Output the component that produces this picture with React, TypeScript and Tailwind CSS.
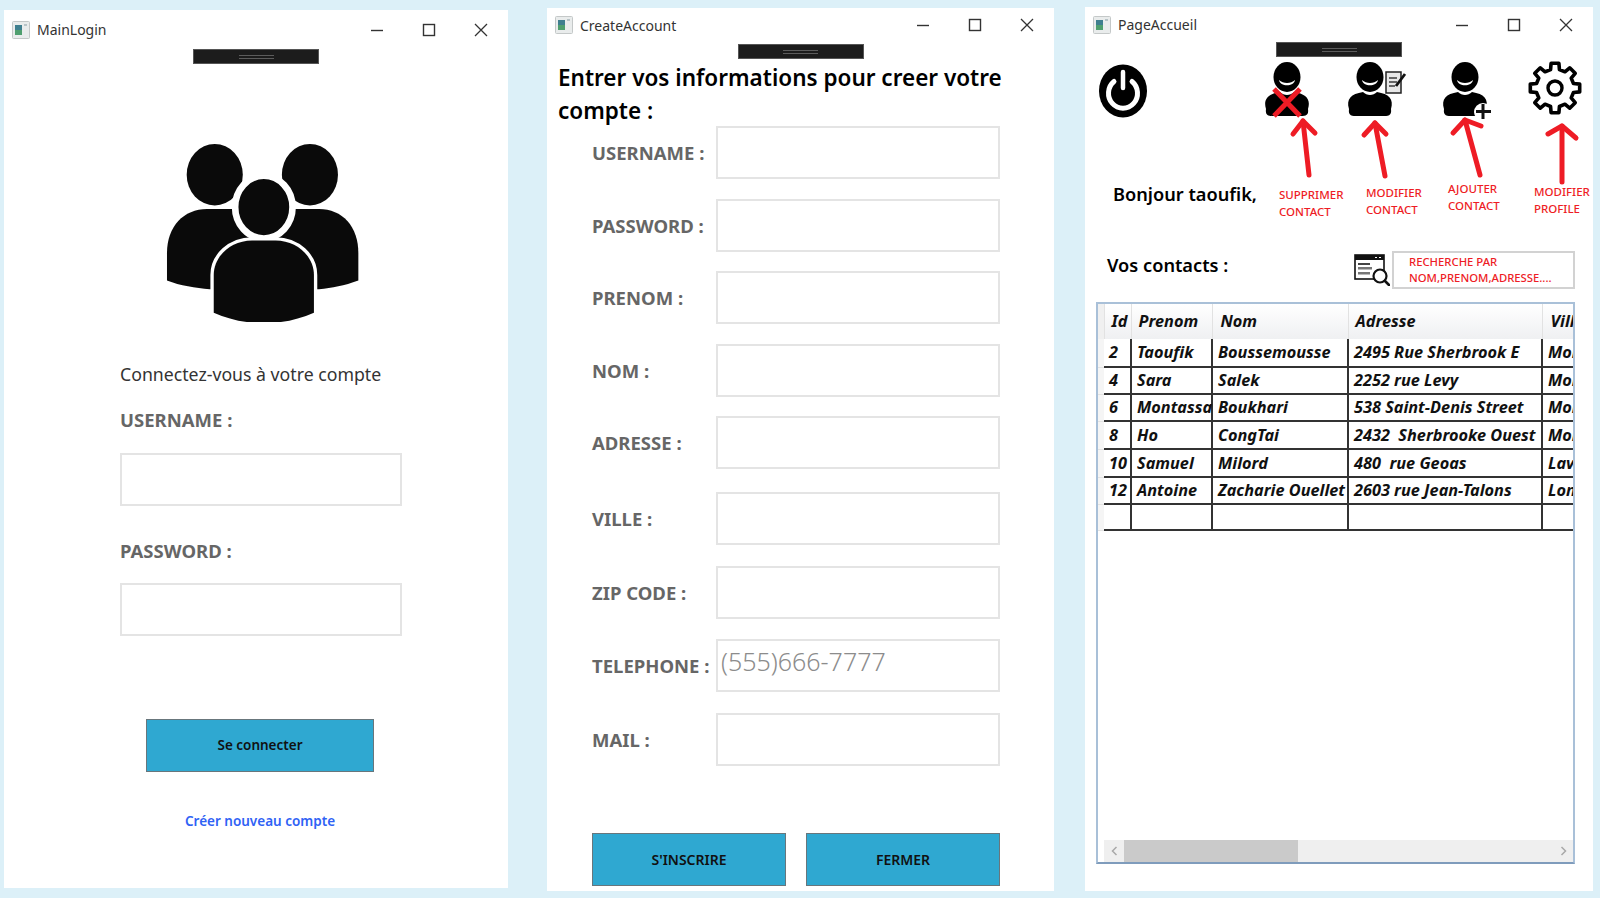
import React from 'react';

const gearPath = (() => {
  const pts: string[] = [];
  const teeth = 8;
  for (let i = 0; i < teeth; i++) {
    const a = (i * Math.PI * 2) / teeth - Math.PI / 2;
    const step = (Math.PI * 2) / teeth;
    const add = (r: number, off: number) => {
      pts.push(`${(28 + r * Math.cos(a + off * step)).toFixed(2)} ${(29 + r * Math.sin(a + off * step)).toFixed(2)}`);
    };
    add(19, -0.3);
    add(25, -0.2);
    add(25, 0.2);
    add(19, 0.3);
  }
  return `M${pts.join('L')}Z`;
})();

const AppIcon = () => (
  <svg width="18" height="18" viewBox="0 0 18 18" className="shrink-0">
    <rect x="0.5" y="0.5" width="17" height="17" rx="1" fill="#e9ecec" stroke="#c4c8c8" />
    <rect x="3" y="4" width="7" height="10" fill="#3f7f8f" />
    <rect x="3" y="9" width="7" height="5" fill="#4f9f6f" />
    <rect x="12" y="3" width="3" height="2" fill="#b8c4c8" />
  </svg>
);

const WindowControls = () => (
  <div className="flex ml-auto pr-px text-[#333]">
    <div className="w-[52px] flex justify-center">
      <svg width="14" height="14" viewBox="0 0 14 14"><path d="M1 7.5h12" stroke="currentColor" strokeWidth="1.4" /></svg>
    </div>
    <div className="w-[52px] flex justify-center">
      <svg width="14" height="14" viewBox="0 0 14 14"><rect x="1.5" y="1.5" width="11" height="11" fill="none" stroke="currentColor" strokeWidth="1.4" /></svg>
    </div>
    <div className="w-[52px] flex justify-center">
      <svg width="14" height="14" viewBox="0 0 14 14"><path d="M1 1l12 12M13 1L1 13" stroke="currentColor" strokeWidth="1.3" /></svg>
    </div>
  </div>
);

const DebugBar = () => (
  <div className="mx-auto w-[126px] h-[15px] bg-[#1c1c1c] border border-[#555] flex items-center justify-center">
    <div className="w-[35px] h-[4px] border-y border-[#5c5c5c]" />
  </div>
);

const Window: React.FC<{ title: string; className: string; barClass: string; children: React.ReactNode }> = ({ title, className, barClass, children }) => (
  <div className={`bg-white shrink-0 self-start ${className}`}>
    <div className={`flex items-center pl-2 text-[14px] text-[#333] ${barClass}`}>
      <AppIcon />
      <span className="ml-[7px]">{title}</span>
      <WindowControls />
    </div>
    <DebugBar />
    {children}
  </div>
);

const Field: React.FC<{ value?: string; className: string }> = ({ value, className }) => (
  <input
    readOnly
    value={value || ''}
    className={`block h-[53px] border-2 border-[#e4e4e4] bg-white px-[3px] pb-[10px] text-[25px] font-light text-[#8c8c8c] outline-none ${className}`}
  />
);

const ActionButton: React.FC<{ label: string; className: string }> = ({ label, className }) => (
  <button className={`h-[53px] bg-[#2fa8d1] border border-[#68767c] font-semibold text-[#111] ${className}`}>{label}</button>
);

const PeopleIcon = () => (
  <svg viewBox="488 433 576 533" className="block w-[193px] h-[178px] ml-[162px] mt-[80px]">
    <ellipse cx="633" cy="525" rx="84" ry="92" fill="#0a0a0a" />
    <ellipse cx="918" cy="525" rx="84" ry="92" fill="#0a0a0a" />
    <path d="M490 842V760C490 680 540 628 610 628H945C1015 628 1063 680 1063 760V842C1020 858 985 864 945 868H618C575 864 530 858 490 842Z" fill="#0a0a0a" />
    <ellipse cx="780" cy="622" rx="86" ry="94" fill="#0a0a0a" stroke="#fff" strokeWidth="20" />
    <path d="M630 938V825C630 770 680 722 745 722H815C880 722 930 770 930 825V938C835 980 725 980 630 938Z" fill="#0a0a0a" stroke="#fff" strokeWidth="20" paintOrder="stroke" />
  </svg>
);

const PowerIcon = () => (
  <svg viewBox="0 0 48 54" className="block w-[48px] h-[54px]">
    <ellipse cx="24" cy="27" rx="24" ry="26.5" fill="#000" />
    <path d="M15 17.5A14.5 15 0 1 0 33 17.5" fill="none" stroke="#fff" strokeWidth="5" strokeLinecap="round" />
    <path d="M24 8v16" stroke="#fff" strokeWidth="4.5" strokeLinecap="round" />
  </svg>
);

const Person: React.FC<{ children?: React.ReactNode }> = ({ children }) => (
  <svg viewBox="0 0 62 59" className="block w-[62px] h-[59px] overflow-visible">
    <ellipse cx="22" cy="18" rx="13.5" ry="15" fill="#000" />
    <path d="M14 21C18 25 26 25 30 21C29 28 15 28 14 21Z" fill="#fff" />
    <path d="M1 50C-2 40 3 35 15 33C19 37 25 37 29 33C41 35 46 40 43 50C44 57 40 57 34 57H10C4 57 0 57 1 50Z" fill="#000" />
    {children}
  </svg>
);

const GearIcon = () => (
  <svg viewBox="0 0 56 58" className="block w-[56px] h-[58px] -ml-[2px]">
    <path d={gearPath} fill="none" stroke="#000" strokeWidth="3.6" strokeLinejoin="round" />
    <circle cx="28" cy="29" r="7" fill="none" stroke="#000" strokeWidth="3.4" />
  </svg>
);

const SearchIcon = () => (
  <svg viewBox="0 0 36 32" className="block w-[36px] h-[32px]">
    <rect x="1" y="1" width="29" height="24" fill="#fff" stroke="#111" strokeWidth="1.6" />
    <rect x="1" y="1" width="29" height="5" fill="#111" />
    <path d="M21 3.5h2M25 3.5h2" stroke="#fff" strokeWidth="1.2" />
    <rect x="4" y="9" width="12" height="2" fill="#444" />
    <rect x="4" y="13" width="14" height="2.5" fill="#777" />
    <rect x="4" y="18" width="12" height="2.5" fill="#777" />
    <circle cx="26" cy="22" r="6.5" fill="#fff" stroke="#111" strokeWidth="2.2" />
    <path d="M31 27l4 4" stroke="#111" strokeWidth="2.6" strokeLinecap="round" />
  </svg>
);

const Arrow: React.FC<{ head: [number, number]; tail: [number, number]; wing: string; width: string }> = ({ head, tail, wing, width }) => (
  <svg viewBox={`0 0 ${width} 60`} className="block w-full h-[60px] overflow-visible">
    <path d={`M${tail[0]} ${tail[1]}L${head[0]} ${head[1]}`} stroke="#ee1c25" strokeWidth="5" strokeLinecap="round" fill="none" />
    <path d={wing} stroke="#ee1c25" strokeWidth="5" strokeLinecap="round" strokeLinejoin="round" fill="none" />
  </svg>
);

const contacts = [
  { id: '2', prenom: 'Taoufik', nom: 'Boussemousse', adresse: '2495 Rue Sherbrook E', ville: 'Montreal', row: 'h-[28px]' },
  { id: '4', prenom: 'Sara', nom: 'Salek', adresse: '2252 rue Levy', ville: 'Montreal', row: 'h-[27px]' },
  { id: '6', prenom: 'Montassa', nom: 'Boukhari', adresse: '538 Saint-Denis Street', ville: 'Montreal', row: 'h-[27px]' },
  { id: '8', prenom: 'Ho', nom: 'CongTai', adresse: '2432  Sherbrooke Ouest', ville: 'Montreal', row: 'h-[28px]' },
  { id: '10', prenom: 'Samuel', nom: 'Milord', adresse: '480  rue Geoas', ville: 'Laval', row: 'h-[28px]' },
  { id: '12', prenom: 'Antoine', nom: 'Zacharie Ouellet', adresse: '2603 rue Jean-Talons', ville: 'Longueuil', row: 'h-[27px]' },
  { id: '', prenom: '', nom: '', adresse: '', ville: '', row: 'h-[26px]' },
];

const createFields = [
  { label: 'USERNAME :', row: '-mt-[1px]' },
  { label: 'PASSWORD :', row: 'mt-[20px]' },
  { label: 'PRENOM :', row: 'mt-[19px]' },
  { label: 'NOM :', row: 'mt-[20px]' },
  { label: 'ADRESSE :', row: 'mt-[19px]' },
  { label: 'VILLE :', row: 'mt-[23px]' },
  { label: 'ZIP CODE :', row: 'mt-[21px]' },
  { label: 'TELEPHONE :', row: 'mt-[20px]', value: '(555)666-7777' },
  { label: 'MAIL :', row: 'mt-[21px]' },
];

const actionLabel = 'text-[11.5px] leading-[17px] font-medium text-[#ee1c25] whitespace-nowrap';
const cell = 'pl-[5px] border-b-2 border-r-2 border-[#333]';

export default function App() {
  return (
    <div className="w-[1600px] h-[898px] overflow-hidden bg-[#dcf0f8] flex font-['Noto_Sans',sans-serif]">
      {/* MainLogin */}
      <Window title="MainLogin" className="ml-[4px] mt-[10px] w-[504px] h-[878px]" barClass="h-[39px]">
        <PeopleIcon />
        <div className="pl-[116px]">
          <p className="mt-[40px] text-[17.7px] leading-[24px] text-[#333]">Connectez-vous à votre compte</p>
          <p className="mt-[22px] text-[18.5px] leading-[24px] font-bold text-[#666]">USERNAME :</p>
          <div className="mt-[21px]"><Field className="w-[282px]" /></div>
          <p className="mt-[33px] text-[18.5px] leading-[24px] font-bold text-[#666]">PASSWORD :</p>
          <div className="mt-[20px]"><Field className="w-[282px]" /></div>
          <div className="mt-[83px] ml-[26px] w-[228px] flex flex-col items-center">
            <ActionButton label="Se connecter" className="w-[228px] text-[13.5px]" />
            <a className="mt-[39px] text-[13.5px] leading-[20px] font-semibold text-[#2f62f5]">Créer nouveau compte</a>
          </div>
        </div>
      </Window>

      {/* CreateAccount */}
      <Window title="CreateAccount" className="ml-[39px] mt-[8px] w-[507px] h-[883px]" barClass="h-[36px] pb-[2px]">
        <h1 className="pl-[11px] mt-[2px] text-[22.5px] leading-[33px] font-semibold text-black">Entrer vos informations pour creer votre compte :</h1>
        <div className="pl-[45px]">
          {createFields.map((f) => (
            <div key={f.label} className={`flex items-center ${f.row}`}>
              <span className="w-[124px] text-[18.5px] font-bold text-[#666] whitespace-nowrap">{f.label}</span>
              <Field value={f.value} className="w-[284px]" />
            </div>
          ))}
          <div className="mt-[67px] flex gap-[20px]">
            <ActionButton label="S'INSCRIRE" className="w-[194px] text-[14px]" />
            <ActionButton label="FERMER" className="w-[194px] text-[14px]" />
          </div>
        </div>
      </Window>

      {/* PageAccueil */}
      <Window title="PageAccueil" className="ml-[31px] mt-[7px] w-[508px] h-[884px] flex flex-col" barClass="h-[35px]">
        <div className="flex mt-[2px]">
          <div className="w-[180px] pl-[14px]">
            <div className="mt-[5px]"><PowerIcon /></div>
            <p className="mt-[63px] ml-[14px] text-[18.2px] leading-[26px] font-semibold text-black whitespace-nowrap">Bonjour taoufik,</p>
          </div>
          <div className="w-[83px]">
            <Person>
              <path d="M9 30L35 57M35 30L9 57" stroke="#ee1c25" strokeWidth="5" />
            </Person>
            <Arrow head={[38, 3]} tail={[44, 57]} wing="M28 16L38 3L50 15" width="83" />
            <p className={`mt-[8px] pl-[14px] ${actionLabel}`}>SUPPRIMER<br />CONTACT</p>
          </div>
          <div className="w-[95px]">
            <Person>
              <rect x="38" y="13" width="15" height="21" fill="#e8e8e8" stroke="#222" strokeWidth="1.5" />
              <path d="M41 19h8M41 23h8M41 27h6" stroke="#666" strokeWidth="1.8" />
              <path d="M48 27L57 15" stroke="#111" strokeWidth="2.8" />
            </Person>
            <Arrow head={[27, 5]} tail={[37, 58]} wing="M16 17L27 5L38 16" width="95" />
            <p className={`mt-[6px] pl-[18px] ${actionLabel}`}>MODIFIER<br />CONTACT</p>
          </div>
          <div className="w-[86px]">
            <Person>
              <circle cx="40" cy="53" r="9" fill="#fff" />
              <path d="M40 45v15M33 52.5h15" stroke="#111" strokeWidth="3" />
            </Person>
            <Arrow head={[22, 2]} tail={[37, 57]} wing="M10 15L22 2L38 8" width="86" />
            <p className={`mt-[2px] pl-[5px] ${actionLabel}`}>AJOUTER<br />CONTACT</p>
          </div>
          <div className="w-[64px]">
            <GearIcon />
            <Arrow head={[33, 9]} tail={[33, 65]} wing="M19 17L33 9L47 21" width="64" />
            <p className={`mt-[6px] pl-[5px] ${actionLabel}`}>MODIFIER<br />PROFILE</p>
          </div>
        </div>

        <div className="mt-[31px] ml-[22px] mr-[18px] flex items-center">
          <span className="mb-[8px] text-[18.2px] font-semibold text-black">Vos contacts :</span>
          <div className="ml-auto flex items-center gap-[2px]">
            <SearchIcon />
            <div className="w-[183px] h-[38px] border-2 border-[#d2d2d2] pl-[15px] text-[11.3px] leading-[16px] font-medium text-[#ee1c25] flex flex-col justify-center whitespace-nowrap">
              <span>RECHERCHE PAR</span>
              <span>NOM,PRENOM,ADRESSE....</span>
            </div>
          </div>
        </div>

        <div className="mt-[13px] ml-[11px] mr-[18px] h-[562px] border-2 border-[#a9c0d8] border-b-[#7f9cbc] flex flex-col overflow-hidden">
          <div className="flex-1 overflow-hidden">
            <table className="table-fixed border-collapse w-[544px] text-[16.3px] italic font-bold text-[#111] whitespace-pre">
              <colgroup>
                <col className="w-[6px]" />
                <col className="w-[27px]" />
                <col className="w-[81px]" />
                <col className="w-[136px]" />
                <col className="w-[194px]" />
                <col className="w-[100px]" />
              </colgroup>
              <thead>
                <tr className="h-[35px] bg-gradient-to-b from-white to-[#eff0f2]">
                  <th className="bg-[#f0f0f0] border-r border-[#e2e2e2]" />
                  <th className="text-left font-bold pl-[7px] border-r border-[#e2e2e2]">Id</th>
                  <th className="text-left font-bold pl-[7px] border-r border-[#e2e2e2]">Prenom</th>
                  <th className="text-left font-bold pl-[8px] border-r border-[#e2e2e2]">Nom</th>
                  <th className="text-left font-bold pl-[7px] border-r border-[#e2e2e2]">Adresse</th>
                  <th className="text-left font-bold pl-[8px]">Ville</th>
                </tr>
              </thead>
              <tbody>
                {contacts.map((c, i) => (
                  <tr key={i} className={c.row}>
                    <td className="bg-[#f5f5f5] border-b border-[#e2e2e2]" />
                    <td className={cell}>{c.id}</td>
                    <td className={cell}>{c.prenom}</td>
                    <td className={cell}>{c.nom}</td>
                    <td className={cell}>{c.adresse}</td>
                    <td className="pl-[5px] border-b-2 border-[#333]">{c.ville}</td>
                  </tr>
                ))}
              </tbody>
            </table>
          </div>
          <div className="ml-[6px] h-[22px] bg-[#efefef] flex items-center shrink-0">
            <span className="w-[20px] flex justify-center">
              <svg width="7" height="10" viewBox="0 0 7 10"><path d="M5.5 1L1.5 5l4 4" fill="none" stroke="#a8a8a8" strokeWidth="1.5" /></svg>
            </span>
            <div className="w-[174px] h-full bg-[#cacaca]" />
            <span className="ml-auto w-[20px] flex justify-center">
              <svg width="7" height="10" viewBox="0 0 7 10"><path d="M1.5 1l4 4-4 4" fill="none" stroke="#a8a8a8" strokeWidth="1.5" /></svg>
            </span>
          </div>
        </div>
      </Window>
    </div>
  );
}
